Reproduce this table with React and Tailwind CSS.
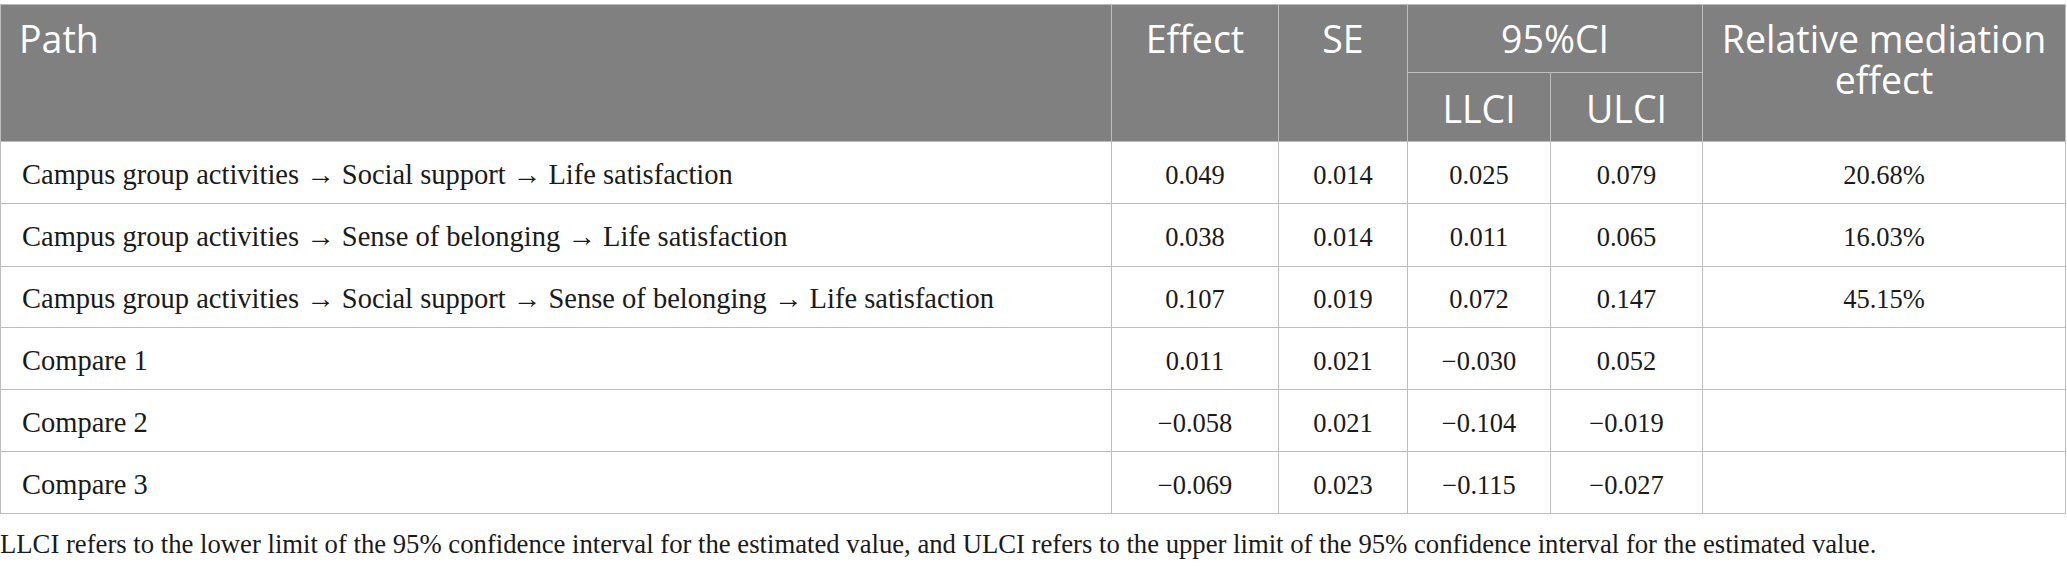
import React from "react";

const rows = [
  ["Campus group activities → Social support → Life satisfaction", "0.049", "0.014", "0.025", "0.079", "20.68%"],
  ["Campus group activities → Sense of belonging → Life satisfaction", "0.038", "0.014", "0.011", "0.065", "16.03%"],
  ["Campus group activities → Social support → Sense of belonging → Life satisfaction", "0.107", "0.019", "0.072", "0.147", "45.15%"],
  ["Compare 1", "0.011", "0.021", "−0.030", "0.052", ""],
  ["Compare 2", "−0.058", "0.021", "−0.104", "−0.019", ""],
  ["Compare 3", "−0.069", "0.023", "−0.115", "−0.027", ""],
];

const serif = { fontFamily: '"Liberation Serif", "Times New Roman", serif' };

const head =
  "bg-[#808080] text-white text-[37.5px] leading-[41px] font-normal font-['Open_Sans',sans-serif] whitespace-nowrap";

export default function App() {
  return (
    <div className="w-[2067px] h-[566px] bg-white overflow-hidden pt-[4px]">
      <div className="grid w-[2066px] gap-px border border-[#bdbdbd] bg-[#bdbdbd] grid-cols-[1110px_166px_128px_142px_151px_362px] grid-rows-[67px_68px_61px_62px_60px_61px_61px_61px]">
        {/* Header */}
        <div className={head + " row-span-2 pt-[13px] pl-[18px]"}>Path</div>
        <div className={head + " row-span-2 pt-[13px] text-center"}>Effect</div>
        <div className={head + " row-span-2 pt-[13px] text-center"}>SE</div>
        <div className={head + " col-span-2 pt-[13px] text-center"}>95%CI</div>
        <div className={head + " row-span-2 pt-[13px] text-center"}>
          Relative mediation
          <br />
          effect
        </div>
        <div className={head + " pt-[15px] text-center"}>LLCI</div>
        <div className={head + " pt-[15px] text-center"}>ULCI</div>

        {/* Body */}
        {rows.map((r, i) =>
          r.map((c, j) => (
            <div
              key={i + "-" + j}
              style={serif}
              className={
                "bg-white text-[#1a1a1a] leading-[30px] flex items-center pt-[4px] whitespace-nowrap " +
                (j === 0 ? "pl-[21px] text-[28.5px]" : "justify-center text-[26.5px]")
              }
            >
              {c}
            </div>
          ))
        )}
      </div>
      <div style={serif} className="mt-[15px] text-[26.7px] leading-[30px] text-[#1a1a1a] whitespace-nowrap">
        LLCI refers to the lower limit of the 95% confidence interval for the estimated value, and ULCI refers to the upper limit of the 95% confidence interval for the estimated value.
      </div>
    </div>
  );
}
